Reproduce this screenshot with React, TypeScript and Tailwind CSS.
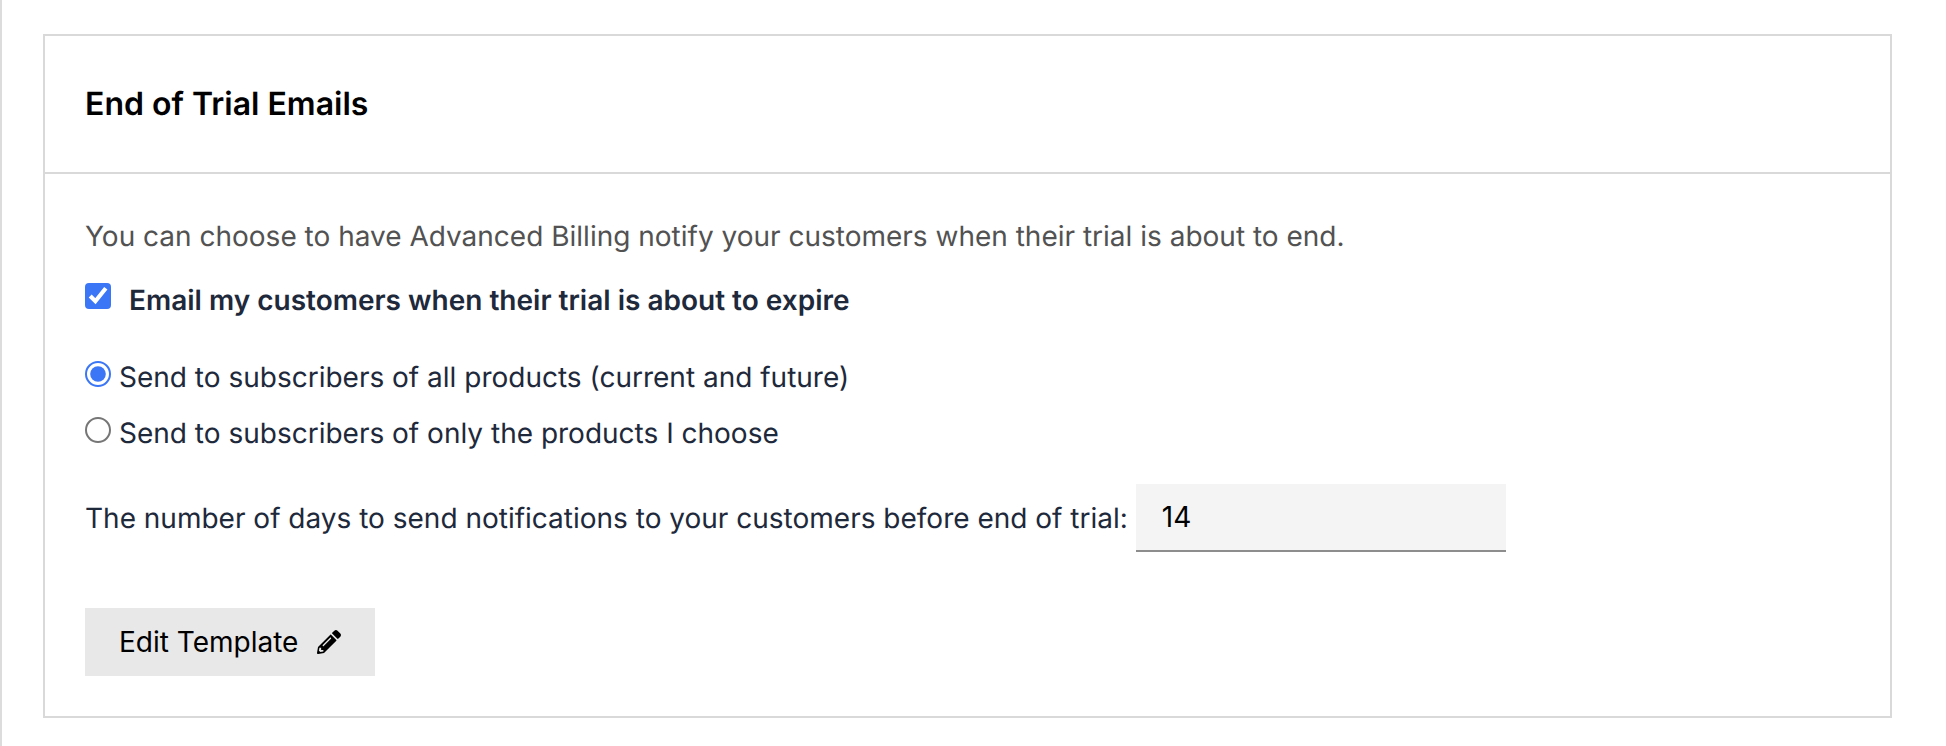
import React from "react";
import { FaPencilAlt } from "react-icons/fa";

const App: React.FC = () => {
  return (
    <div className="w-[1946px] h-[746px] bg-white border-l-2 border-[#dcdcdc] pt-[34px] pl-[41px] pr-[54px] font-['Inter',sans-serif] antialiased [text-rendering:geometricPrecision] overflow-hidden">
      <div className="border-2 border-[#d9d9d9]">
        <div className="h-[138px] flex items-center px-[40px] border-b-2 border-[#d9d9d9]">
          <h2 className="text-[32px] font-semibold text-black">End of Trial Emails</h2>
        </div>
        <div className="px-[40px] pt-[44px] pb-[40px]">
          <p className="text-[28px] leading-[36px] text-[#525252]">
            You can choose to have Advanced Billing notify your customers when their trial is about to end.
          </p>
          <label className="flex items-start gap-[18px] mt-[25px]">
            <input type="checkbox" defaultChecked className="w-[13px] h-[13px] m-0 mt-[2px] [zoom:2] accent-[#3b76f6]" />
            <span className="text-[28px] font-semibold text-[#1e293b]">Email my customers when their trial is about to expire</span>
          </label>
          <div className="mt-[38px] flex flex-col gap-[20px]">
            <label className="flex items-start gap-[8px] text-[28px] leading-[36px] text-[#1e293b]">
              <input type="radio" name="scope" defaultChecked className="w-[13px] h-[13px] m-0 mt-[1px] [zoom:2] accent-[#3b76f6]" />
              Send to subscribers of all products (current and future)
            </label>
            <label className="flex items-start gap-[8px] text-[28px] leading-[36px] text-[#1e293b]">
              <input type="radio" name="scope" className="w-[13px] h-[13px] m-0 mt-[1px] [zoom:2] accent-[#3b76f6]" />
              Send to subscribers of only the products I choose
            </label>
          </div>
          <div className="mt-[33px] flex items-center gap-[8px] text-[28px] text-[#1e293b]">
            <span>The number of days to send notifications to your customers before end of trial:</span>
            <input defaultValue="14" className="w-[370px] h-[68px] px-[26px] bg-[#f4f4f4] border-b-2 border-[#8d8d8d] text-black outline-none" />
          </div>
          <button className="mt-[56px] h-[68px] w-[290px] pl-[34px] bg-[#e8e8e8] flex items-center gap-[19px] text-[28px] text-black">
            Edit Template
            <FaPencilAlt size={24} />
          </button>
        </div>
      </div>
    </div>
  );
};

export default App;
